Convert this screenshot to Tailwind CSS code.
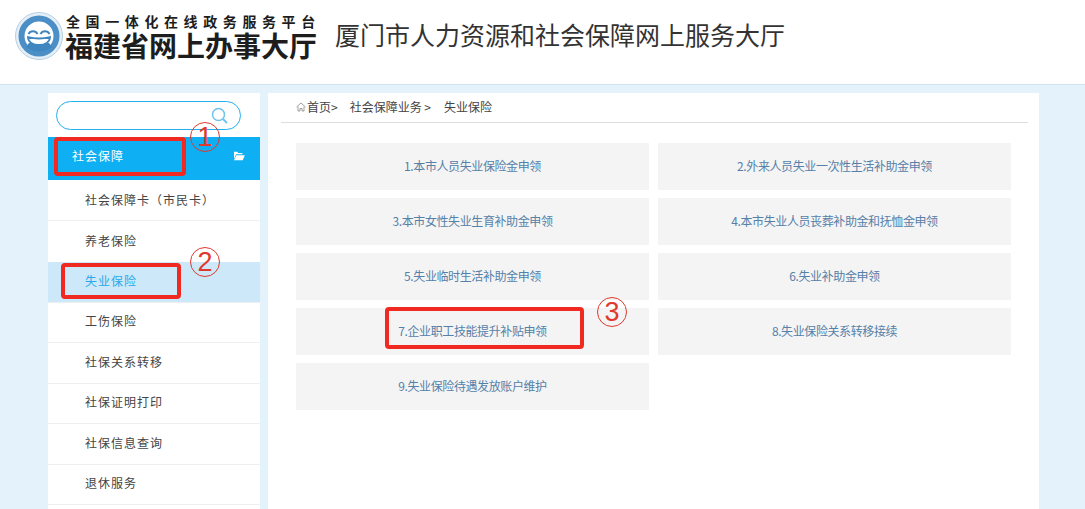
<!DOCTYPE html>
<html lang="zh-CN">
<head>
<meta charset="utf-8">
<script src="https://cdn.jsdelivr.net/npm/@tailwindcss/browser@4"></script>
</head>
<body class="relative h-[509px] w-[1085px] overflow-hidden bg-[#e3f2fb] font-['Noto_Sans_CJK_SC',sans-serif] text-[12px]">
<header class="flex h-[85px] items-start border-b border-[#cfe3f0] bg-white">
  <svg class="ml-[15px] mt-[12px] h-[48px] w-[48px] shrink-0" viewBox="0 0 48 48">
    <circle cx="24" cy="24" r="23.500" fill="#e6eff6" stroke="#b5cfe3" stroke-width="1"/>
    <circle cx="24" cy="24" r="17.500" fill="#fff" stroke="#4b8fc6" stroke-width="6"/>
    <path d="M11 35q13 9 26 0l-3-4H14z" fill="#3f86c0"/>
    <path d="M13.500 22a5 5 0 0 1 9 0M25.500 22a5 5 0 0 1 9 0" fill="none" stroke="#3f86c0" stroke-width="2"/>
    <path d="M13 25q11 3 22 0c0 5-5 8-11 8s-11-3-11-8z" fill="#fff" stroke="#3f86c0" stroke-width="1.800"/>
  </svg>
  <div class="ml-[3px] mt-[12px] w-[255px] shrink-0 text-[#1d1d1d]">
    <div class="h-[19px] whitespace-nowrap text-[14px] leading-[19px] font-bold tracking-[5.6px]">全国一体化在线政务服务平台</div>
    <div class="-ml-[1px] h-[28px] whitespace-nowrap text-[28px] leading-[28px] font-bold">福建省网上办事大厅</div>
  </div>
  <h1 class="ml-[14px] mt-[14px] whitespace-nowrap text-[25px] leading-[40px] font-normal text-[#333]">厦门市人力资源和社会保障网上服务大厅</h1>
</header>

<div class="flex items-start gap-[8px] pl-[48px] pt-[8px]">
  <aside class="h-[416px] w-[212px] shrink-0 bg-white">
    <div class="flex h-[44px] items-start px-[8px] pt-[8px]">
      <div class="flex h-[29px] w-[185px] items-center justify-end rounded-full border border-[#22b0ee] pr-[12px]">
        <svg class="h-[17px] w-[17px]" viewBox="0 0 17 17" fill="none" stroke="#6fc3ea" stroke-width="1.5"><circle cx="7.500" cy="7.500" r="6"/><path d="M12 12l4 4" stroke-width="2"/></svg>
      </div>
    </div>
    <div class="flex h-[43px] items-center justify-between bg-[#0eb0f3] pl-[24px] pr-[15px] pb-[6px] text-white tracking-[1px]">
      <span>社会保障</span>
      <svg class="h-[10px] w-[12px]" viewBox="0 0 14 12" fill="#fff"><path d="M1 1h4l1 1.500h5V4H3.500L1 9.500z"/><path d="M3.800 5H14l-2.500 6H1z"/></svg>
    </div>
    <ul class="text-[#444] tracking-[1px]">
      <li class="flex h-[41px] items-center border-b border-[#edf0f2] pl-[37px]">社会保障卡（市民卡）</li>
      <li class="flex h-[41px] items-center pb-[2px] pl-[37px]">养老保险</li>
      <li class="flex h-[41px] items-center border-b border-[#edf0f2] bg-[#cce8f9] pb-[2px] pl-[37px] text-[#2aa9ea]">失业保险</li>
      <li class="flex h-[40px] items-center border-b border-[#edf0f2] pb-[3px] pl-[37px]">工伤保险</li>
      <li class="flex h-[41px] items-center border-b border-[#edf0f2] pb-[2px] pl-[37px]">社保关系转移</li>
      <li class="flex h-[40px] items-center border-b border-[#edf0f2] pb-[3px] pl-[37px]">社保证明打印</li>
      <li class="flex h-[41px] items-center border-b border-[#edf0f2] pb-[2px] pl-[37px]">社保信息查询</li>
      <li class="flex h-[40px] items-center border-b border-[#edf0f2] pb-[3px] pl-[37px]">退休服务</li>
    </ul>
  </aside>

  <main class="h-[416px] w-[771px] shrink-0 bg-white pl-[13px] pr-[11px]">
    <nav class="flex h-[30px] items-center border-b border-[#dedede] pb-[2px] pl-[15px] text-[#444]">
      <svg class="mr-[1px] h-[10px] w-[10px]" viewBox="0 0 10 10" fill="none" stroke="#888" stroke-width=".8"><path d="M.5 5L5 1l4.500 4M2 4.500V9h2V6.500h2V9h2V4.500"/></svg>
      <span>首页&gt;</span><span class="ml-[12px]">社会保障业务 &gt;</span><span class="ml-[13px]">失业保险</span>
    </nav>
    <div class="ml-[15px] mt-[20px] grid w-[715px] grid-cols-[353px_353px] gap-x-[9px] gap-y-[8px] tracking-[-0.4px] text-[#5580a8]">
      <a class="flex h-[47px] items-center justify-center bg-[#f4f4f4] pb-[2px]">1.本市人员失业保险金申领</a>
      <a class="flex h-[47px] items-center justify-center bg-[#f4f4f4] pb-[2px]">2.外来人员失业一次性生活补助金申领</a>
      <a class="flex h-[47px] items-center justify-center bg-[#f4f4f4] pb-[2px]">3.本市女性失业生育补助金申领</a>
      <a class="flex h-[47px] items-center justify-center bg-[#f4f4f4] pb-[2px]">4.本市失业人员丧葬补助金和抚恤金申领</a>
      <a class="flex h-[47px] items-center justify-center bg-[#f4f4f4] pb-[2px]">5.失业临时生活补助金申领</a>
      <a class="flex h-[47px] items-center justify-center bg-[#f4f4f4] pb-[2px]">6.失业补助金申领</a>
      <a class="flex h-[47px] items-center justify-center bg-[#f4f4f4] pb-[2px]">7.企业职工技能提升补贴申领</a>
      <a class="flex h-[47px] items-center justify-center bg-[#f4f4f4] pb-[2px]">8.失业保险关系转移接续</a>
      <a class="flex h-[47px] items-center justify-center bg-[#f4f4f4] pb-[2px]">9.失业保险待遇发放账户维护</a>
    </div>
  </main>
</div>

<div class="absolute left-[54px] top-[137px] h-[39px] w-[132px] rounded-[4px] border-[4px] border-[#f02a20]"></div>
<div class="absolute left-[61px] top-[263px] h-[36px] w-[120px] rounded-[4px] border-[4px] border-[#f02a20]"></div>
<div class="absolute left-[385px] top-[307px] h-[42px] w-[199px] rounded-[4px] border-[4px] border-[#f02a20]"></div>
<div class="absolute left-[190px] top-[122px] flex h-[30px] w-[30px] items-center justify-center rounded-full border-[1.5px] border-[#e0382c] font-['Liberation_Sans'] text-[27px] leading-none text-[#e0382c]">1</div>
<div class="absolute left-[190px] top-[247px] flex h-[30px] w-[30px] items-center justify-center rounded-full border-[1.5px] border-[#e0382c] font-['Liberation_Sans'] text-[27px] leading-none text-[#e0382c]">2</div>
<div class="absolute left-[597px] top-[297px] flex h-[30px] w-[30px] items-center justify-center rounded-full border-[1.5px] border-[#e0382c] font-['Liberation_Sans'] text-[27px] leading-none text-[#e0382c]">3</div>
</body>
</html>
